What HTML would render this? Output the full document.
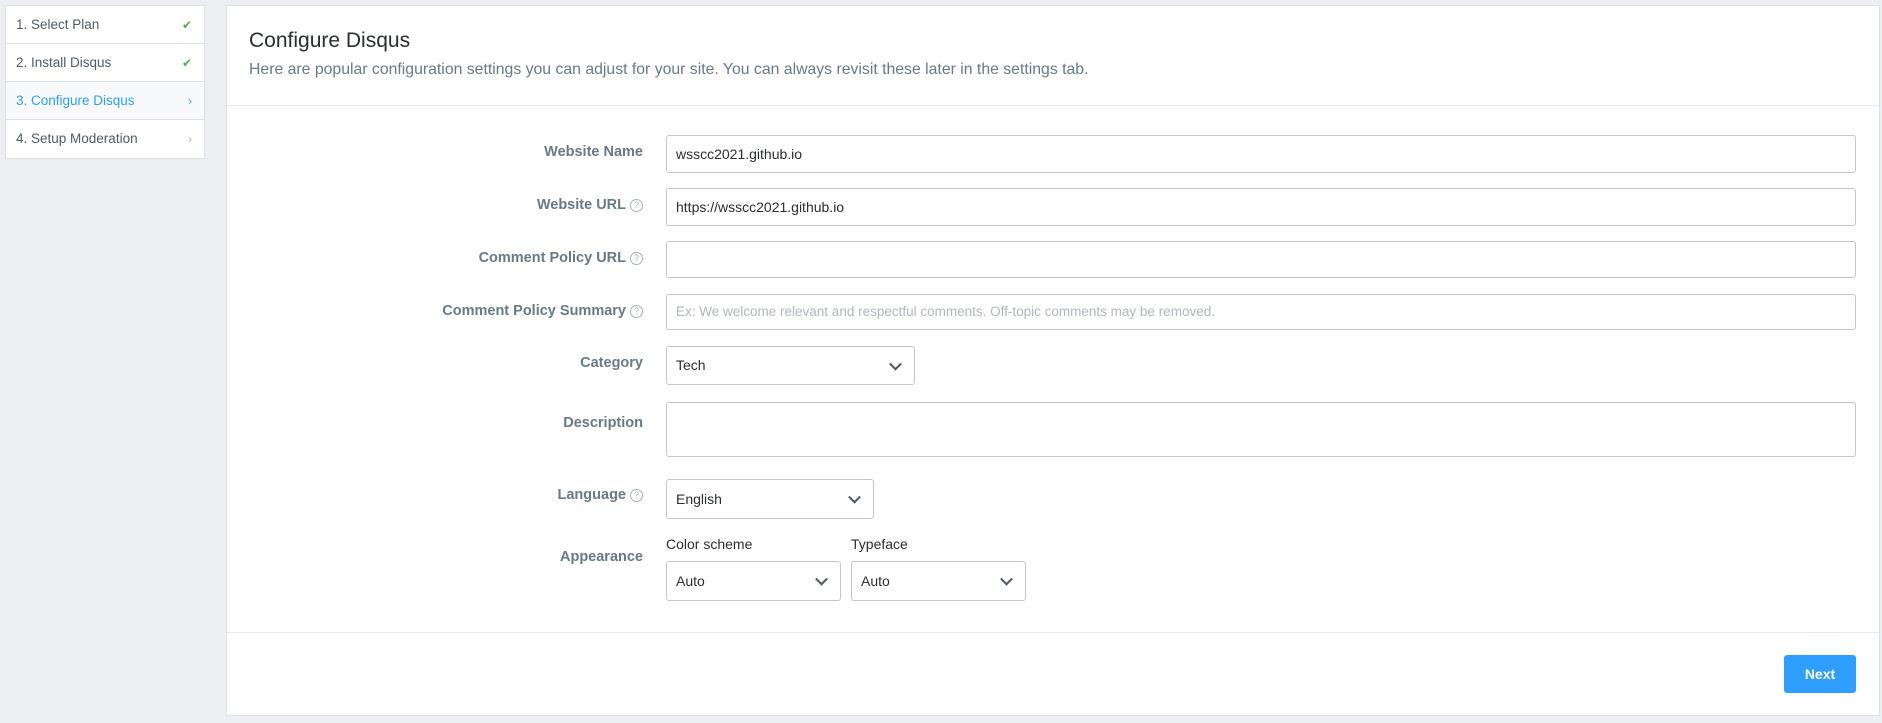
<!DOCTYPE html>
<html><head><meta charset="utf-8"><style>
*{box-sizing:border-box;margin:0;padding:0}
body{width:1882px;height:723px;background:#eceef2;font-family:"Liberation Sans",sans-serif;position:relative;overflow:hidden;color:#2a2e2e}
.side{position:absolute;left:5px;top:5px;width:200px;background:#fff;border:1px solid #dde1e6}
.side div{height:38px;line-height:38px;padding-left:10px;font-size:13.5px;color:#4f5b66;border-bottom:1px solid #dde1e6;position:relative}
.side div:last-child{border-bottom:none}
.side div.act{background:#f7f9fb;color:#2e9fff}
.side span{position:absolute;right:12px;top:0;font-size:12px}
.card{position:absolute;left:226px;top:5px;width:1654px;height:711px;background:#fff;border:1px solid #dde1e6;border-radius:2px}
h1{position:absolute;left:22px;top:23px;font-size:21px;font-weight:normal;color:#2a2e2e}
.sub{position:absolute;left:22px;top:55px;font-size:15.8px;color:#687a86}
.hr{position:absolute;left:0;right:0;height:1px;background:#e7e9ee}
.lab{position:absolute;right:1236px;font-size:14.5px;font-weight:bold;color:#687a86;text-align:right;white-space:nowrap}
.q{display:inline-block;width:13px;height:13px;border:1px solid #a9b2b9;border-radius:50%;font-size:9px;line-height:11px;text-align:center;color:#a9b2b9;font-weight:normal;margin-left:4px;vertical-align:1px}
.in{position:absolute;left:439px;border:1px solid #c2c6cc;border-radius:3px;font-size:14px;color:#2a2e2e;padding-left:9px;background:#fff}
.ph{color:#b0b7bf}
.chev{position:absolute;right:14px;top:50%;width:9px;height:9px;border-right:2px solid #4f5b66;border-bottom:2px solid #4f5b66;transform:translateY(-70%) rotate(45deg)}
.sm{position:absolute;font-size:14px;color:#2a2e2e}
.btn{position:absolute;left:1557px;top:649px;width:72px;height:38px;background:#2e9fff;border-radius:3px;color:#fff;font-weight:bold;font-size:14px;text-align:center;line-height:38px}
</style></head><body>
<div class="side">
<div>1. Select Plan<span style="color:#4fb05a">✔</span></div>
<div>2. Install Disqus<span style="color:#4fb05a">✔</span></div>
<div class="act">3. Configure Disqus<span style="color:#2e9fff">›</span></div>
<div>4. Setup Moderation<span style="color:#b0b7bf">›</span></div>
</div>
<div class="card">
<h1>Configure Disqus</h1>
<div class="sub">Here are popular configuration settings you can adjust for your site. You can always revisit these later in the settings tab.</div>
<div class="hr" style="top:99px"></div>

<div class="lab" style="top:138px">Website Name</div>
<div class="in" style="top:129px;width:1190px;height:38px;line-height:36px">wsscc2021.github.io</div>

<div class="lab" style="top:191px">Website URL<span class="q">?</span></div>
<div class="in" style="top:182px;width:1190px;height:38px;line-height:36px">https://wsscc2021.github.io</div>

<div class="lab" style="top:244px">Comment Policy URL<span class="q">?</span></div>
<div class="in" style="top:235px;width:1190px;height:37px"></div>

<div class="lab" style="top:297px">Comment Policy Summary<span class="q">?</span></div>
<div class="in ph" style="top:288px;width:1190px;height:36px;line-height:34px;font-size:13.5px">Ex: We welcome relevant and respectful comments. Off-topic comments may be removed.</div>

<div class="lab" style="top:349px">Category</div>
<div class="in" style="top:340px;width:249px;height:39px;line-height:37px">Tech<i class="chev"></i></div>

<div class="lab" style="top:409px">Description</div>
<div class="in" style="top:396px;width:1190px;height:55px"></div>

<div class="lab" style="top:481px">Language<span class="q">?</span></div>
<div class="in" style="top:473px;width:208px;height:40px;line-height:38px">English<i class="chev"></i></div>

<div class="lab" style="top:543px">Appearance</div>
<div class="sm" style="left:439px;top:530px">Color scheme</div>
<div class="sm" style="left:624px;top:530px">Typeface</div>
<div class="in" style="top:555px;width:175px;height:40px;line-height:38px">Auto<i class="chev"></i></div>
<div class="in" style="top:555px;left:624px;width:175px;height:40px;line-height:38px">Auto<i class="chev"></i></div>

<div class="hr" style="top:626px"></div>
<div class="btn">Next</div>
</div>
</body></html>
